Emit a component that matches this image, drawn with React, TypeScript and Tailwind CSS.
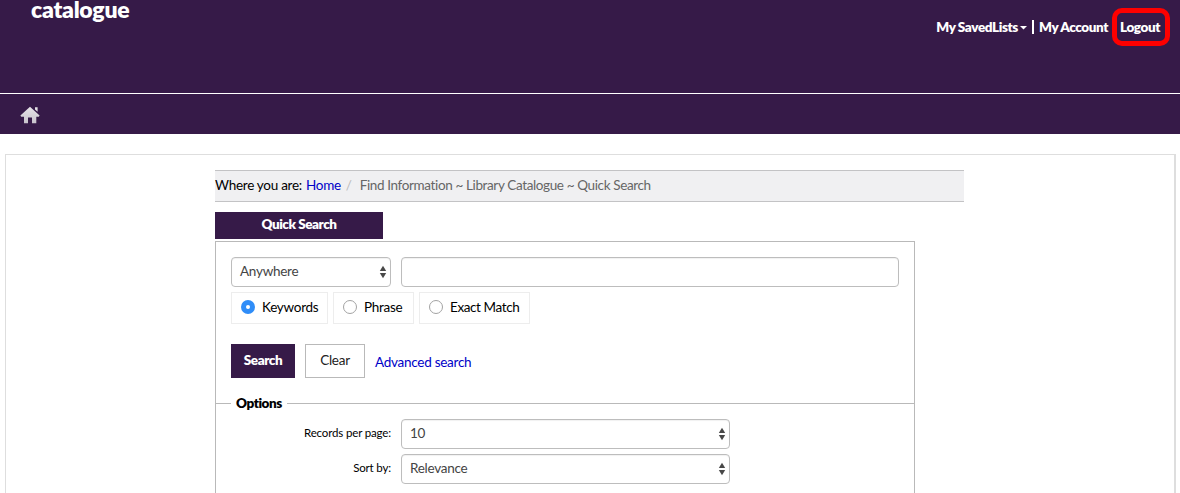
import type { ReactNode } from "react";

function Arrows() {
  return (
    <svg width="8" height="14" viewBox="0 0 8 14" className="shrink-0" fill="#484848">
      <path d="M4 0.8 7.2 6H0.8Z" />
      <path d="M0.8 8H7.2L4 13.2Z" />
    </svg>
  );
}

function Select({ value, className }: { value: string; className: string }) {
  return (
    <div
      className={`flex h-[30px] items-center justify-between rounded-[4px] border border-[#bdbdbd] bg-white pr-[3px] pl-2 text-[#444] shadow-[inset_0_1px_1px_rgba(0,0,0,0.06)] ${className}`}
    >
      <span className="-mt-0.5">{value}</span>
      <Arrows />
    </div>
  );
}

function Radio({ label, checked, className }: { label: ReactNode; checked?: boolean; className: string }) {
  return (
    <label className={`flex h-8 items-center border border-[#ededed] pl-[9px] ${className}`}>
      {checked ? (
        <span className="-mt-0.5 flex size-[14px] items-center justify-center rounded-full bg-[#2f8df8]">
          <span className="size-1 rounded-full bg-white" />
        </span>
      ) : (
        <span className="-mt-0.5 size-[14px] rounded-full border border-[#a3a3a3] bg-white" />
      )}
      <span className="-mt-0.5 ml-[7px]">{label}</span>
    </label>
  );
}

function OptionRow({ label, value }: { label: string; value: string }) {
  return (
    <div className="flex items-center">
      <span className="-mt-0.5 mr-[10px] w-[175px] text-right text-[11.5px] tracking-[-0.15px]">{label}</span>
      <Select value={value} className="w-[329px]" />
    </div>
  );
}

export default function App() {
  return (
    <div className="h-[493px] w-[1180px] overflow-hidden bg-white font-['Lato',sans-serif] text-[13.5px] leading-5 tracking-[-0.27px] whitespace-nowrap text-black">
      <header className="flex h-[94px] items-start justify-between border-b border-white bg-[#361a48] text-white">
        <h1 className="ml-[31px] text-[23px] leading-[18px] font-extrabold tracking-[-0.25px]">catalogue</h1>
        <nav className="mt-2 mr-[10px] flex h-[38px] items-center font-extrabold tracking-[-0.4px]">
          <span>My SavedLists</span>
          <svg width="7" height="4" viewBox="0 0 7 4" className="mt-0.5 ml-[2px]" fill="white">
            <path d="M0 0H7L3.5 3.5Z" />
          </svg>
          <span className="mr-[5px] ml-[5px] h-[14px] w-[2px] bg-white" />
          <span>My Account</span>
          <span className="ml-1 flex h-[38px] w-[58px] items-center justify-center rounded-[10px] border-[5px] border-[#fe0000] pr-0.5">
            Logout
          </span>
        </nav>
      </header>
      <div className="flex h-10 items-center bg-[#361a48] pl-5">
        <svg width="20" height="18" viewBox="0 0 20 18" className="mt-0.5">
          <defs>
            <linearGradient id="roof" x1="0" y1="0" x2="0" y2="1">
              <stop offset="0" stopColor="#e6e3e8" />
              <stop offset="1" stopColor="#c8c3cc" />
            </linearGradient>
          </defs>
          <path
            d="M10 0.8 19.6 9.6 18.8 10.8H16.3V17.2H12V11.5H8V17.2H4V10.8H1.2L0.4 9.6ZM15 1.2H17.6V5.8L15 3.6Z"
            fill="url(#roof)"
          />
        </svg>
      </div>
      <main className="mt-5 ml-[5px] h-[360px] w-[1171px] border border-[#dedede] border-r-2 pt-[15px] pl-[209px]">
        <div className="flex h-8 w-[749px] items-center border-y border-[#c3c3c5] bg-[#f0f0f2] pb-0.5">
          <span>Where you are:</span>
          <a className="ml-1 text-[#0000c8]">Home</a>
          <span className="ml-[5px] text-[#bbb]">/</span>
          <span className="ml-2 tracking-[-0.37px] text-[#666]">Find Information ~ Library Catalogue ~ Quick Search</span>
        </div>
        <div className="mt-[10px] flex h-[27px] w-[168px] items-center justify-center bg-[#361a48] pb-[3px] font-extrabold tracking-[-0.45px] text-white">
          Quick Search
        </div>
        <section className="mt-[2px] h-[280px] w-[700px] border border-[#b9b9b9] pt-[15px]">
          <div className="flex gap-[10px] pl-[15px]">
            <Select value="Anywhere" className="w-[160px]" />
            <div className="h-[30px] w-[498px] rounded-[4px] border border-[#bdbdbd] shadow-[inset_0_1px_1px_rgba(0,0,0,0.06)]" />
          </div>
          <div className="mt-[5px] flex gap-[5px] pl-[15px]">
            <Radio label="Keywords" checked className="w-[97px]" />
            <Radio label="Phrase" className="w-[81px]" />
            <Radio label="Exact Match" className="w-[111px] tracking-[-0.4px]" />
          </div>
          <div className="mt-5 flex h-[34px] pl-[15px]">
            <button className="w-16 bg-[#361a48] pb-0.5 font-extrabold tracking-[-0.45px] text-white">Search</button>
            <button className="ml-[10px] w-[60px] border border-[#b9b9b9] pb-0.5 text-[#222]">Clear</button>
            <a className="mt-2 ml-[10px] text-[#0000c8]">Advanced search</a>
          </div>
          <div className="mt-[15px] flex h-5 items-center">
            <span className="h-px w-[15px] bg-[#b9b9b9]" />
            <span className="px-[5px] font-extrabold tracking-[-0.45px]">Options</span>
            <span className="h-px flex-1 bg-[#b9b9b9]" />
          </div>
          <div className="mt-1.5 flex flex-col gap-[5px]">
            <OptionRow label="Records per page:" value="10" />
            <OptionRow label="Sort by:" value="Relevance" />
          </div>
        </section>
      </main>
    </div>
  );
}
